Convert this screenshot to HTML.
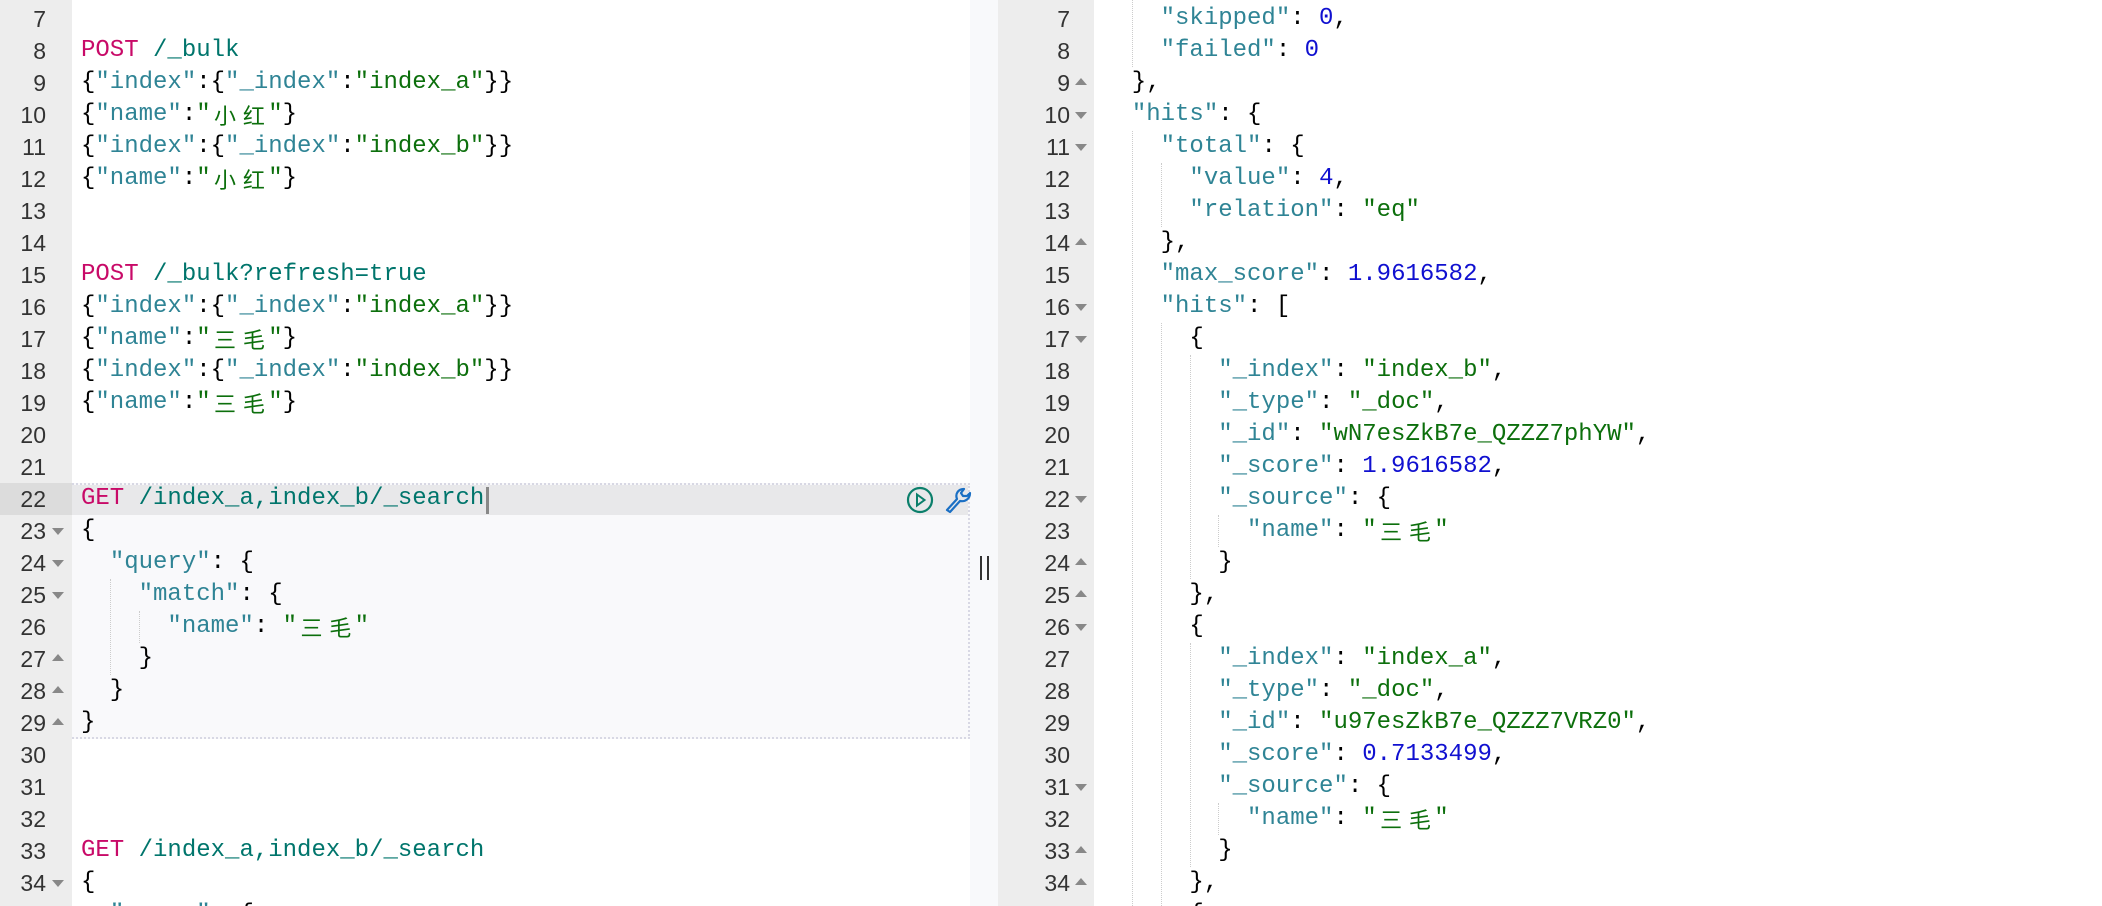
<!DOCTYPE html>
<html><head><meta charset="utf-8"><style>
html,body{margin:0;padding:0;width:2102px;height:906px;overflow:hidden;background:#fff}
#w{position:relative;width:2102px;height:906px;overflow:hidden;font-family:"Liberation Mono","Noto Sans CJK SC",monospace;font-size:24px;}
.g{position:absolute;top:0;height:906px;background:#ededed}
.l{position:absolute;height:32px;line-height:32px;white-space:pre;color:#000;overflow:hidden}
.n{position:absolute;height:32px;line-height:32px;text-align:right;color:#333;font-family:"Liberation Sans",sans-serif;font-size:23px}
.f{position:absolute;width:0;height:0;border-left:6px solid transparent;border-right:6px solid transparent}
.d{border-top:7px solid #888}.u{border-bottom:7px solid #888}
.m{color:#c80a68}.p{color:#00756c}.k{color:#2f8495}.s{color:#0c6f0c}.v{color:#1010d0}
.c{display:inline-block;width:28.8px;height:32px;line-height:32px;vertical-align:top;text-align:center;font-family:"Noto Sans CJK SC",sans-serif;font-size:22px;overflow:hidden}
.ig{position:absolute;border-left:1px dotted #ccc;width:0}
</style></head><body><div id="w">
<div class="g" style="left:0;width:72px"></div>
<div style="position:absolute;left:970px;top:0;width:28px;height:906px;background:#f8f9fb"></div>
<div class="g" style="left:998px;width:96px"></div>
<div style="position:absolute;left:72px;top:483px;width:898px;height:256px;background:#f9f9fb;border-top:2px dotted #d8d8e4;border-bottom:2px dotted #d8d8e4;border-right:2px dotted #d8d8e4;box-sizing:border-box"></div>
<div style="position:absolute;left:72px;top:485px;width:896px;height:30px;background:#e8e8ea"></div>
<div style="position:absolute;left:0;top:483px;width:72px;height:32px;background:#dcdcdc"></div>
<div style="position:absolute;left:486px;top:487px;width:3px;height:27px;background:#888"></div>
<svg style="position:absolute;left:906px;top:486px" width="28" height="28" viewBox="0 0 28 28"><circle cx="14" cy="14" r="12" fill="none" stroke="#0b7f6b" stroke-width="2.2"/><path d="M11 8.5 L18.5 14 L11 19.5 Z" fill="none" stroke="#0b7f6b" stroke-width="2"/></svg>
<svg style="position:absolute;left:944px;top:486px" width="28" height="28" viewBox="0 0 28 28"><path d="M3 24 L13 13 C11 8 14 3 20 3 L17 7 L19 10 L23 10 L26 7 C26 13 21 16 16 15 L6 26 Z" fill="none" stroke="#1a6fc4" stroke-width="2.2" stroke-linejoin="round"/></svg>
<div style="position:absolute;left:980px;top:556px;width:2px;height:24px;background:#333"></div>
<div style="position:absolute;left:987px;top:556px;width:2px;height:24px;background:#333"></div>
<div class="ig" style="left:110px;top:579px;height:96px"></div>
<div class="ig" style="left:139px;top:611px;height:32px"></div>
<div class="ig" style="left:1132px;top:0;height:67px"></div>
<div class="ig" style="left:1132px;top:131px;height:775px"></div>
<div class="ig" style="left:1161px;top:163px;height:64px"></div>
<div class="ig" style="left:1161px;top:323px;height:583px"></div>
<div class="ig" style="left:1190px;top:355px;height:224px"></div>
<div class="ig" style="left:1190px;top:643px;height:224px"></div>
<div class="ig" style="left:1218px;top:515px;height:32px"></div>
<div class="ig" style="left:1218px;top:803px;height:32px"></div>
<div id="L"></div>
</div>
<script>
const C=(a,b)=>`<span class="s">"<span class="c">${a}</span><span class="c">${b}</span>"</span>`;
const L=[
[7,''],[8,'<span class="m">POST</span> <span class="p">/_bulk</span>'],
[9,'{<span class="k">"index"</span>:{<span class="k">"_index"</span>:<span class="s">"index_a"</span>}}'],
[10,'{<span class="k">"name"</span>:'+C('小','红')+'}'],
[11,'{<span class="k">"index"</span>:{<span class="k">"_index"</span>:<span class="s">"index_b"</span>}}'],
[12,'{<span class="k">"name"</span>:'+C('小','红')+'}'],
[13,''],[14,''],[15,'<span class="m">POST</span> <span class="p">/_bulk?refresh=true</span>'],
[16,'{<span class="k">"index"</span>:{<span class="k">"_index"</span>:<span class="s">"index_a"</span>}}'],
[17,'{<span class="k">"name"</span>:'+C('三','毛')+'}'],
[18,'{<span class="k">"index"</span>:{<span class="k">"_index"</span>:<span class="s">"index_b"</span>}}'],
[19,'{<span class="k">"name"</span>:'+C('三','毛')+'}'],
[20,''],[21,''],[22,'<span class="m">GET</span> <span class="p">/index_a,index_b/_search</span>'],
[23,'{','d'],[24,'  <span class="k">"query"</span>: {','d'],[25,'    <span class="k">"match"</span>: {','d'],
[26,'      <span class="k">"name"</span>: '+C('三','毛')],
[27,'    }','u'],[28,'  }','u'],[29,'}','u'],[30,''],[31,''],[32,''],
[33,'<span class="m">GET</span> <span class="p">/index_a,index_b/_search</span>'],[34,'{','d'],[35,'  <span class="k">"query"</span>: {','d']];
const R=[
[6,'    <span class="k">"successful"</span>: <span class="v">1</span>,'],
[7,'    <span class="k">"skipped"</span>: <span class="v">0</span>,'],[8,'    <span class="k">"failed"</span>: <span class="v">0</span>'],
[9,'  },','u'],[10,'  <span class="k">"hits"</span>: {','d'],[11,'    <span class="k">"total"</span>: {','d'],
[12,'      <span class="k">"value"</span>: <span class="v">4</span>,'],[13,'      <span class="k">"relation"</span>: <span class="s">"eq"</span>'],
[14,'    },','u'],[15,'    <span class="k">"max_score"</span>: <span class="v">1.9616582</span>,'],[16,'    <span class="k">"hits"</span>: [','d'],
[17,'      {','d'],[18,'        <span class="k">"_index"</span>: <span class="s">"index_b"</span>,'],[19,'        <span class="k">"_type"</span>: <span class="s">"_doc"</span>,'],
[20,'        <span class="k">"_id"</span>: <span class="s">"wN7esZkB7e_QZZZ7phYW"</span>,'],[21,'        <span class="k">"_score"</span>: <span class="v">1.9616582</span>,'],
[22,'        <span class="k">"_source"</span>: {','d'],[23,'          <span class="k">"name"</span>: '+C('三','毛')],
[24,'        }','u'],[25,'      },','u'],[26,'      {','d'],[27,'        <span class="k">"_index"</span>: <span class="s">"index_a"</span>,'],
[28,'        <span class="k">"_type"</span>: <span class="s">"_doc"</span>,'],[29,'        <span class="k">"_id"</span>: <span class="s">"u97esZkB7e_QZZZ7VRZ0"</span>,'],
[30,'        <span class="k">"_score"</span>: <span class="v">0.7133499</span>,'],[31,'        <span class="k">"_source"</span>: {','d'],
[32,'          <span class="k">"name"</span>: '+C('三','毛')],[33,'        }','u'],[34,'      },','u'],[35,'      {','d']];
let h='';
function put(arr,nx,nw,fx,tx){for(const [n,t,f] of arr){const y=3+(n-7)*32;
h+=`<div class="n" style="left:${nx}px;width:${nw}px;top:${y}px">${n}</div>`;
if(f)h+=`<div class="f ${f}" style="left:${fx}px;top:${y+(f=='d'?13:11)}px"></div>`;
h+=`<div class="l" style="left:${tx}px;top:${y}px">${t}</div>`;}}
put(L,0,46,52,81);put(R,998,72,1075,1103);
document.getElementById('L').innerHTML=h;
</script>
</body></html>
